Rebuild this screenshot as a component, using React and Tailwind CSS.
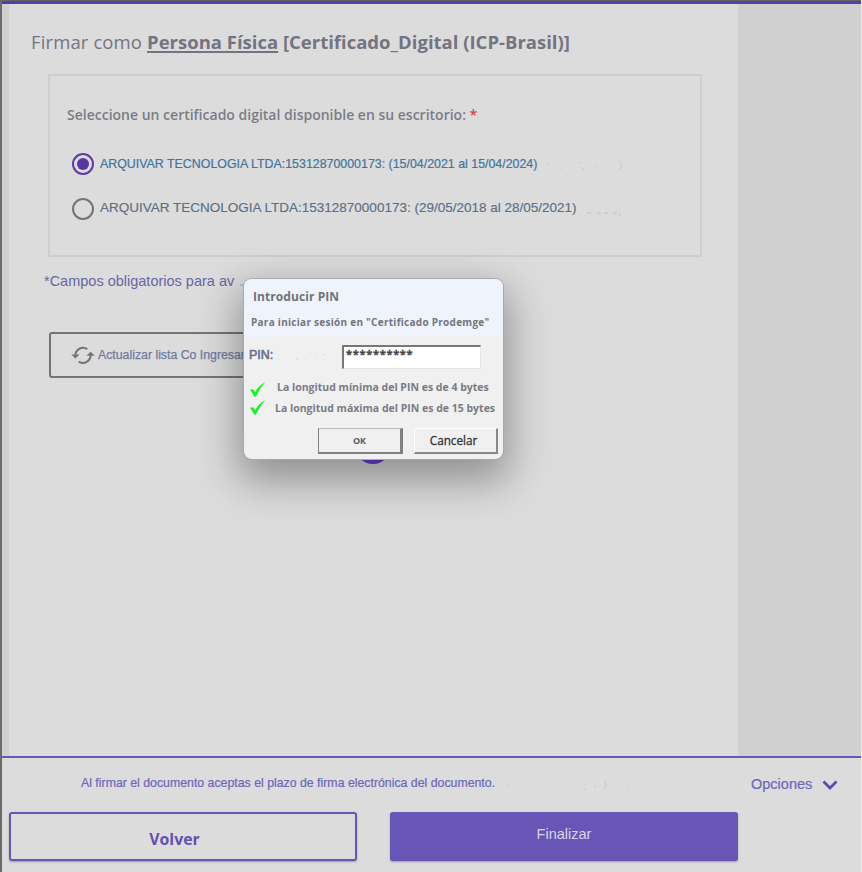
const ARIAL = "font-['Liberation_Sans',Arial,sans-serif]";
const OPEN = "font-['Open_Sans',sans-serif]";

// Faint residual strokes that trail after some of the labels.
function Specks({ d, width, height = 12, className = "" }) {
  return (
    <svg width={width} height={height} viewBox={`0 0 ${width} ${height}`} fill="none" strokeWidth="1" className={`shrink-0 ${className}`}>
      <path d={d} stroke="currentColor" />
    </svg>
  );
}

function Radio({ checked }) {
  return (
    <span className={`flex size-[22px] shrink-0 items-center justify-center rounded-full border-2 ${checked ? "border-[#6039a5]" : "border-[#747474]"}`}>
      {checked && <span className="size-3 rounded-full bg-[#5b35a3]" />}
    </span>
  );
}

function RefreshIcon() {
  return (
    <svg width="24" height="20" viewBox="0 0 24 20" className="shrink-0" fill="none">
      <path d="M4.4 10.5A7.6 7.6 0 0 1 16.2 4.1" stroke="#747474" strokeWidth="2" />
      <path d="M19.6 10A7.6 7.6 0 0 1 7.8 16.6" stroke="#747474" strokeWidth="2" />
      <path d="M0.2 9.4H8.6L4.4 13.4Z M15.4 10.8H23.8L19.6 6.8Z" fill="#747474" />
    </svg>
  );
}

function Check() {
  return (
    <svg width="16" height="16" viewBox="0 0 16 16" className="shrink-0">
      <path d="M0 7.8L3.2 7.2L5.1 10.2C7.6 5.8 10.8 2.2 15.3 0.2C11.4 4.5 8.3 9 6 14.8H4.6Z" fill="#12f51c" />
    </svg>
  );
}

function PinDialog() {
  return (
    <div className="absolute left-[244px] top-[279px] flex h-[180px] w-[259px] flex-col overflow-hidden rounded-lg bg-[#f0f0f0] ring-1 ring-[#a9a9a9]">
      <div className="h-[58px] shrink-0 bg-[#eff3fb]">
        <div className={`${OPEN} pl-[9px] pt-[9px] text-[12px] font-bold leading-[17px] text-[#70737d] tracking-[0.08px]`}>Introducir PIN</div>
        <div className={`${OPEN} whitespace-nowrap pl-[7px] pt-[9px] text-[10px] font-bold leading-4 text-[#74757f] tracking-[0.27px]`}>
          Para iniciar sesión en "Certificado Prodemge"
        </div>
      </div>
      <div className="flex h-9 shrink-0 pt-2">
        <div className={`${ARIAL} flex w-[98px] pl-[5px] pt-[2px] text-[12.4px] leading-4 text-[#69708f] [-webkit-text-stroke:0.6px_#69708f]`}>
          PIN:
          <Specks width={34} className="ml-[23px] mt-1 text-[#ccdde0]" d="M1 7v2 M9 8h1 M19 8h1 M28 3v1 M28 8v1" />
        </div>
        <div className={`${OPEN} h-6 w-[139px] border-l-2 border-t-2 border-[#777] border-b border-r border-b-[#e4e4e4] border-r-[#e4e4e4] bg-white pl-0.5 text-[11px] font-bold leading-[14px] tracking-[0.74px] text-[#454545] [-webkit-text-stroke:0.3px_#454545]`}>**********</div>
      </div>
      <div className={`${OPEN} flex flex-col whitespace-nowrap text-[10.5px] font-bold text-[#7a7b86]`}>
        <div className="flex h-[21px] pl-1.5 pt-[9px]">
          <Check />
          <span className="-mt-1 ml-[11px] leading-[18px]">La longitud mínima del PIN es de 4 bytes</span>
        </div>
        <div className="flex h-[21px] pl-1.5 pt-1.5">
          <Check />
          <span className="-mt-px ml-[9px] leading-[18px]">La longitud máxima del PIN es de 15 bytes</span>
        </div>
      </div>
      <div className="flex gap-[11px] pl-[74px] pt-[13px]">
        <button className={`${OPEN} h-[26px] w-[85px] border-2 border-l border-t border-r-[3px] border-[#808080] border-t-[#bbb] text-[9px] font-bold text-[#5c5c5c]`}>OK</button>
        <button className={`${OPEN} h-[26px] w-[84px] border-b-2 border-r-2 border-[#888] border-l border-t border-l-white border-t-white pr-1 text-[11.7px] text-[#333] [-webkit-text-stroke:0.3px_#333]`}>Cancelar</button>
      </div>
    </div>
  );
}

export default function App() {
  return (
    <div className="relative flex h-[872px] w-[862px] flex-col overflow-hidden border-l-2 border-r border-l-[#6b6b6b] border-r-[#ededed] bg-[#dcdcdc]">
      <div className="h-1 shrink-0 border-b-[3px] border-[#533fae] bg-[#666]" />
      <div className="flex h-[752px] shrink-0">
        <div className="w-[7px] shrink-0 bg-[#d0d0d0]" />
        <main className="w-[729px] shrink-0 bg-[#dcdcdc]">
          <h1 className={`${OPEN} whitespace-nowrap pl-[22px] pt-[25px] text-[18.5px] leading-[26px] text-[#737481]`}>
            <span className="tracking-[0.12px]">Firmar como </span><span className="font-bold underline decoration-2 underline-offset-[2px]">Persona Física</span>
            <span className="font-bold"> [Certificado_Digital (ICP-Brasil)]</span>
          </h1>
          <section className="ml-[39px] mt-[19px] h-[183px] w-[654px] border-2 border-[#cfcfcf] pl-[17px]">
            <p className={`${OPEN} whitespace-nowrap pt-[29px] text-[14px] font-semibold leading-5 text-[#7b7c87]`}>
              Seleccione un certificado digital disponible en su escritorio: <span className="text-[#d5493f]">*</span>
            </p>
            <div className={`${ARIAL} mt-[28px] flex items-center whitespace-nowrap pl-[5px] text-[12.4px] text-[#43749c]`}>
              <Radio checked />
              <span className="ml-[6px] [-webkit-text-stroke:0.2px_#43749c]">ARQUIVAR TECNOLOGIA LTDA:15312870000173: (15/04/2021 al 15/04/2024)</span>
              <Specks width={78} className="ml-2.5 mt-1 text-[#bccbd2]" d="M1 3v2 M12 10l2-2 M22 9l2-2 M31 3h2 M36 8v2 M48 5v2 M61 4v2 M63 10h1 M73 1q3 5 0 9" />
            </div>
            <div className={`${ARIAL} mt-[23px] flex items-center whitespace-nowrap pl-[5px] text-[13.5px] text-[#5b7083]`}>
              <Radio />
              <span className="-mt-0.5 ml-[6px] [-webkit-text-stroke:0.15px_#5b7083]">ARQUIVAR TECNOLOGIA LTDA:15312870000173: (29/05/2018 al 28/05/2021)</span>
              <Specks width={46} className="mt-1 text-[#bdc3c8]" d="M3 9l1 1 M10 8h4 M20 8h4 M27 8h4 M36 8h4 M42 10l2-1" />
            </div>
          </section>
          <p className={`${ARIAL} flex h-[34px] items-end whitespace-nowrap pl-[35px] pt-4 text-[14.5px] leading-5 text-[#6866a3]`}>
            *Campos obligatorios para av
            <Specks width={8} className="mb-0.5 ml-1 text-[#a5a5b8]" d="M2 8h4" />
          </p>
          <div className={`${ARIAL} ml-[40px] mt-[41px] flex h-[46px] w-[330px] items-center whitespace-nowrap rounded-[3px] border-2 border-[#747474] pl-5 text-[12.3px] text-[#717ba0]`}>
            <RefreshIcon />
            <span className="ml-[3px] [-webkit-text-stroke:0.25px_#717ba0]">Actualizar lista Co Ingresar</span>
          </div>
        </main>
        <aside className="flex-1 bg-[#d0d0d0]" />
      </div>
      <footer className="flex-1 border-t-2 border-[#6756b5] bg-[#dcdcdc]">
        <div className={`${ARIAL} flex h-[54px] items-center whitespace-nowrap text-[#6b67bb]`}>
          <span className="-mt-1 w-[504px] pl-[79px] text-[12.32px] [-webkit-text-stroke:0.2px_#6b67bb]">Al firmar el documento aceptas el plazo de firma electrónica del documento.</span>
          <Specks width={164} className="text-[#bfcbd5]" d="M2 5v2 M20 6h1 M34 7h1 M62 3v2 M78 5v2 M79 9v2 M89 6v3 M98 2q4 4 0 8 M108 9h1 M120 8h2 M132 8h1 M144 9h1 M159 8h1" />
          <span className="ml-[81px] text-[14.5px] [-webkit-text-stroke:0.2px_#6b67bb]">Opciones</span>
          <svg width="16" height="10" viewBox="0 0 16 10" fill="none" className="ml-2.5"><path d="M1.5 1.5L8 8L14.5 1.5" stroke="#5c49b2" strokeWidth="2.8" /></svg>
        </div>
        <div className="flex gap-[33px] pl-[7px]">
          <button className={`${OPEN} h-[49px] w-[348px] rounded-[3px] border-2 border-[#6756b5] pr-[17px] pt-[6px] text-[15.8px] font-bold text-[#6350b4] shadow-[0_1px_2px_rgba(0,0,0,0.3)]`}>Volver</button>
          <button className={`${ARIAL} h-[49px] w-[348px] rounded-[3px] bg-[#6756b5] pb-[4px] text-[14.5px] text-[#d9d5ed] shadow-[0_1px_2px_rgba(0,0,0,0.3)]`}>Finalizar</button>
        </div>
      </footer>
      <div className="absolute left-[242px] top-[279px] h-[180px] w-[259px] rounded-lg shadow-[0_16px_40px_6px_rgba(0,0,0,0.34)]" />
      <div className="absolute left-[353px] top-[428px] size-9 rounded-full bg-[#4f2d98]" />
      <div className="absolute -left-0.5 top-0"><PinDialog /></div>
    </div>
  );
}
